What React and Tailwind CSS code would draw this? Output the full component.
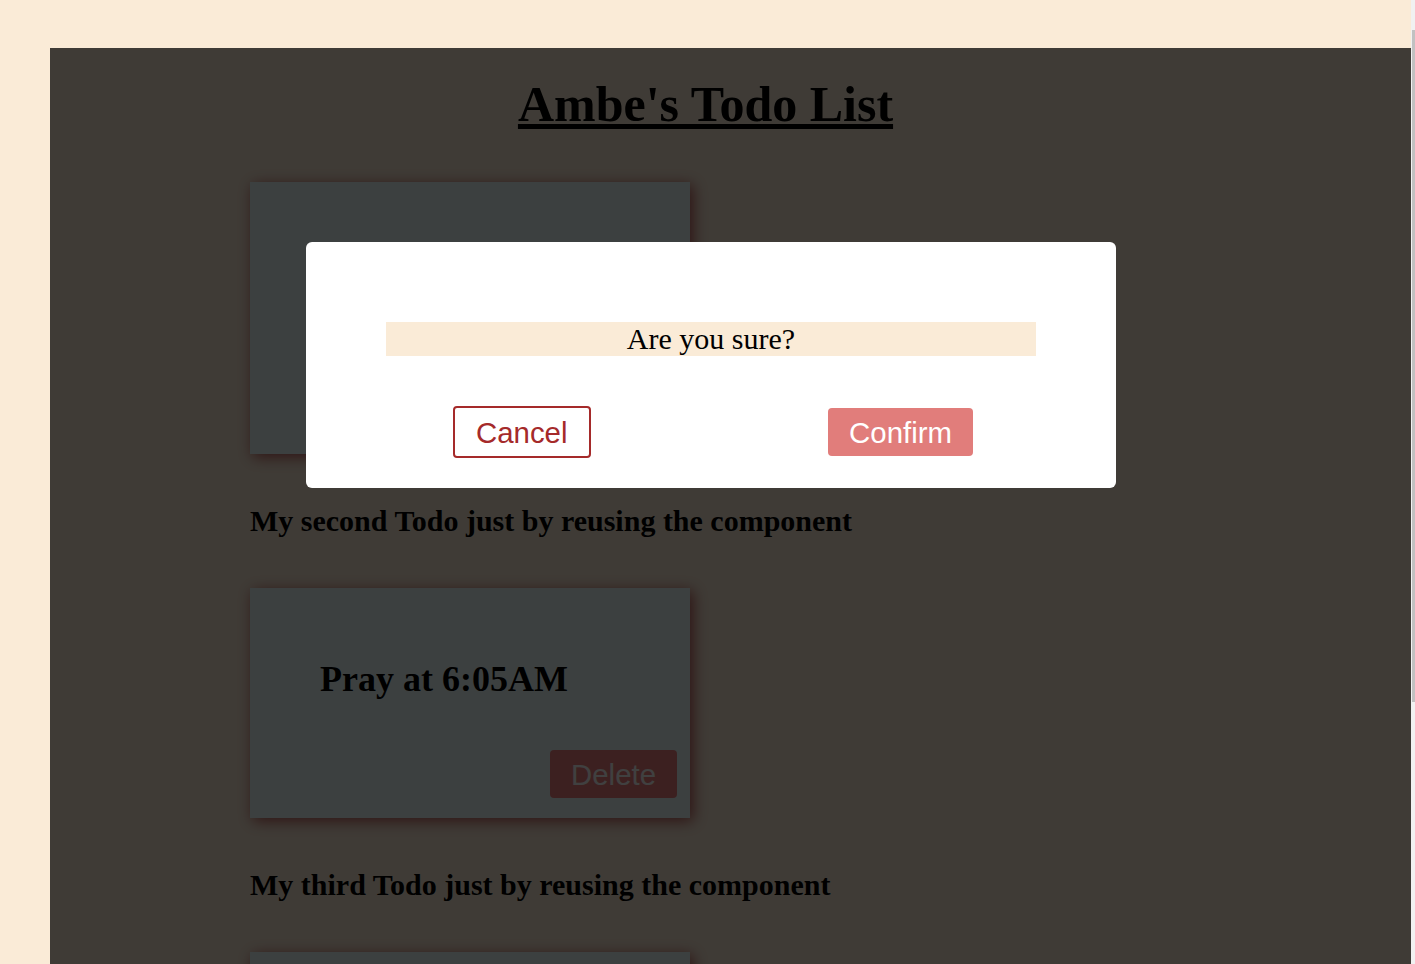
const todos = [
  { id: 1, text: "Learn React and Tailwind CSS" },
  { id: 2, text: "Pray at 6:05AM", title: "My second Todo just by reusing the component" },
  { id: 3, text: "Go to the market", title: "My third Todo just by reusing the component" },
];

function Todo({ text }) {
  return (
    <div className="mt-[50px] w-[440px] bg-[#f0ffff] pl-[70px] pr-[13px] pt-[70px] pb-[20px] shadow-[3px_3px_14px_rgba(165,42,42,0.8)]">
      <h2 className="pr-[10px] text-[36px] leading-[42px] font-bold">{text}</h2>
      <div className="mt-[50px] flex justify-end">
        <button className="rounded-[4px] bg-[#f08080] px-[21px] py-[7.5px] font-['Liberation_Sans',Arial,sans-serif] text-[29.4px] leading-[33px] text-white">
          Delete
        </button>
      </div>
    </div>
  );
}

function Modal() {
  return (
    <div className="absolute left-[306px] top-[242px] z-20 w-[810px] rounded-[6px] bg-white px-[80px] pt-[80px] pb-[30px]">
      <p className="bg-[#faebd7] text-center text-[30px] leading-[34px] text-black">Are you sure?</p>
      <div className="mt-[50px] flex items-center justify-between pl-[67px] pr-[63px] font-['Liberation_Sans',Arial,sans-serif] text-[29.4px] leading-[33px]">
        <button className="rounded-[4px] border-2 border-[#a52a2a] bg-white px-[21px] py-[7.5px] text-[#a52a2a]">Cancel</button>
        <button className="rounded-[4px] bg-[#e17d7b] px-[21px] py-[7.5px] text-white">Confirm</button>
      </div>
    </div>
  );
}

export default function App() {
  return (
    <div className="flex h-screen overflow-hidden bg-[#faebd7] font-['Liberation_Serif','Times_New_Roman',serif] text-black">
      <div className="relative flex-1 overflow-hidden">
        <div className="pt-[76px]">
          <h1 className="text-center text-[50px] leading-[56px] font-bold underline">Ambe's Todo List</h1>
          <div className="mt-[3px] pl-[250px]">
            {todos.map((t) => (
              <div key={t.id}>
                {t.title && <h2 className="mt-[50px] text-[30px] leading-[34px] font-bold">{t.title}</h2>}
                <Todo text={t.text} />
              </div>
            ))}
          </div>
        </div>
        <div className="absolute left-[50px] top-[48px] right-0 bottom-0 z-10 bg-black/75" />
        <Modal />
      </div>
      <div className="w-[4px] bg-[#f1f1f1] pl-[1px]">
        <div className="mt-[30px] h-[672px] bg-[#c1c1c1]" />
      </div>
    </div>
  );
}
